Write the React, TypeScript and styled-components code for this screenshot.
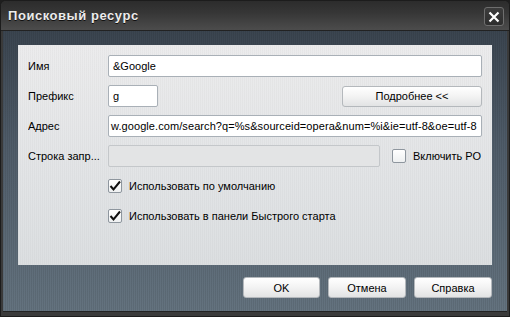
import styled, { createGlobalStyle } from "styled-components";

const GlobalStyle = createGlobalStyle`
    html, body {
        margin: 0;
        padding: 0;
        background: #1e1e1e;
    }
    body {
        font-family: "Liberation Sans", Arial, sans-serif;
        font-size: 11px;
        color: #000;
    }
`;

const Window = styled.div`
    width: 510px;
    height: 317px;
    box-sizing: border-box;
    display: flex;
    flex-direction: column;
    background: #3a3a3a;
    border: 1px solid #1c1c1c;
    border-radius: 6px 6px 0 0;
    overflow: hidden;
`;

const TitleBar = styled.div`
    height: 29px;
    flex: none;
    display: flex;
    align-items: center;
    justify-content: space-between;
    padding: 0 5px 0 7px;
    background: linear-gradient(#2c2c2c, #363636 40%, #4c4c4c);
    border-bottom: 1px solid #222;
`;

const Title = styled.div`
    font-weight: bold;
    font-size: 13px;
    letter-spacing: 0.55px;
    color: #ececec;
    text-shadow: 0 1px 0 #111;
    padding-bottom: 1px;
`;

const CloseButton = styled.div`
    width: 20px;
    height: 19px;
    box-sizing: border-box;
    border: 1px solid #6e6e6e;
    border-radius: 3px;
    background: linear-gradient(#3c3c3c, #2e2e2e);
    display: flex;
    align-items: center;
    justify-content: center;
    margin-top: 2px;
`;

const Body = styled.div`
    flex: 1;
    margin: 0 2px 4px 2px;
    display: flex;
    flex-direction: column;
    padding: 14px 15px 0 15px;
    background:
        repeating-linear-gradient(90deg, rgba(0, 0, 0, 0.08) 0 1px, transparent 1px 2px),
        linear-gradient(#3b4550, #4f5c69 40%, #64737f);
    border-bottom: 1px solid #232323;
`;

const Panel = styled.div`
    height: 220px;
    box-sizing: border-box;
    padding: 10px 10px 0 10px;
    display: flex;
    flex-direction: column;
    gap: 8px;
    background:
        repeating-linear-gradient(90deg, rgba(0, 0, 0, 0.025) 0 1px, transparent 1px 2px),
        linear-gradient(#ececed, #e2e4e6 60%, #dcdfe1);
`;

const Row = styled.div<{ indent?: boolean }>`
    height: 22px;
    display: flex;
    align-items: center;
    padding-left: ${(p) => (p.indent ? "80px" : "0")};
`;

const Label = styled.div`
    width: 80px;
    flex: none;
    white-space: nowrap;
    overflow: hidden;
`;

const Field = styled.div<{ width?: number; disabled?: boolean; tight?: boolean }>`
    height: 22px;
    box-sizing: border-box;
    flex: ${(p) => (p.width ? "none" : "1")};
    width: ${(p) => (p.width ? `${p.width}px` : "auto")};
    border: 1px solid ${(p) => (p.disabled ? "#c4c7ca" : "#a9b0b7")};
    border-radius: 2px;
    background: ${(p) => (p.disabled ? "#e3e4e5" : "#fff")};
    padding: 0 ${(p) => (p.tight ? "2px" : "4px")};
    letter-spacing: ${(p) => (p.tight ? "0.08px" : "0")};
    display: flex;
    align-items: center;
    white-space: nowrap;
    overflow: hidden;
`;

const Spacer = styled.div`
    flex: 1;
`;

const Button = styled.div<{ width: number }>`
    width: ${(p) => p.width}px;
    height: 21px;
    box-sizing: border-box;
    border: 1px solid #b4b8bc;
    border-radius: 3px;
    background: linear-gradient(#ffffff, #f4f4f4 45%, #e2e3e4);
    display: flex;
    align-items: center;
    justify-content: center;
    flex: none;
`;

const CheckRow = styled.div`
    display: flex;
    align-items: center;
    gap: 7px;
`;

const Box = styled.div`
    width: 14px;
    height: 14px;
    box-sizing: border-box;
    border: 1px solid #8e969e;
    border-radius: 2px;
    background: linear-gradient(#ffffff, #eef0f1);
    display: flex;
    align-items: center;
    justify-content: center;
`;

const ButtonBar = styled.div`
    display: flex;
    justify-content: flex-end;
    gap: 8px;
    margin-top: 12px;
`;

const Check = ({ checked }: { checked: boolean }) => (
    <Box>
        {checked && (
            <svg width="12" height="12" viewBox="0 0 12 12">
                <path d="M1.5 6 L4.5 9.5 L11 1.5" stroke="#111" strokeWidth="2" fill="none" />
            </svg>
        )}
    </Box>
);

export default function App() {
    return (
        <>
            <GlobalStyle />
            <Window>
                <TitleBar>
                    <Title>Поисковый ресурс</Title>
                    <CloseButton>
                        <svg width="12" height="12" viewBox="0 0 12 12">
                            <path d="M1.5 1.5 L10.5 10.5 M10.5 1.5 L1.5 10.5" stroke="#fff" strokeWidth="2.2" />
                        </svg>
                    </CloseButton>
                </TitleBar>
                <Body>
                    <Panel>
                        <Row>
                            <Label>Имя</Label>
                            <Field>&amp;Google</Field>
                        </Row>
                        <Row>
                            <Label>Префикс</Label>
                            <Field width={50}>g</Field>
                            <Spacer />
                            <Button width={140}>Подробнее &lt;&lt;</Button>
                        </Row>
                        <Row>
                            <Label>Адрес</Label>
                            <Field tight>
                                w.google.com/search?q=%s&amp;sourceid=opera&amp;num=%i&amp;ie=utf-8&amp;oe=utf-8
                            </Field>
                        </Row>
                        <Row>
                            <Label>Строка запр...</Label>
                            <Field width={272} disabled />
                            <Spacer />
                            <CheckRow>
                                <Check checked={false} />
                                <span>Включить РО</span>
                            </CheckRow>
                            <Spacer style={{ flex: "none", width: 1 }} />
                        </Row>
                        <Row indent>
                            <CheckRow>
                                <Check checked />
                                <span>Использовать по умолчанию</span>
                            </CheckRow>
                        </Row>
                        <Row indent>
                            <CheckRow>
                                <Check checked />
                                <span>Использовать в панели Быстрого старта</span>
                            </CheckRow>
                        </Row>
                    </Panel>
                    <ButtonBar>
                        <Button width={77}>OK</Button>
                        <Button width={78}>Отмена</Button>
                        <Button width={78}>Справка</Button>
                    </ButtonBar>
                </Body>
            </Window>
        </>
    );
}
